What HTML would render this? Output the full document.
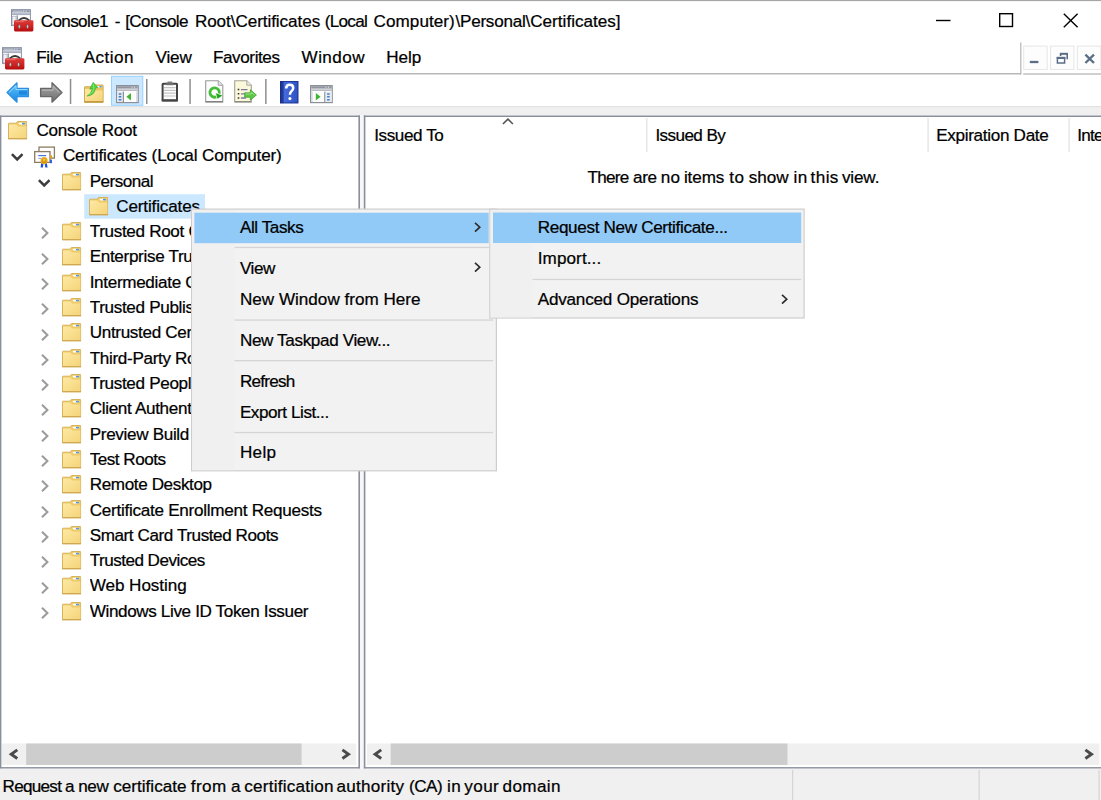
<!DOCTYPE html>
<html><head><meta charset="utf-8"><title>Console1</title>
<style>
html,body{margin:0;padding:0;overflow:hidden}
#w{position:absolute;left:0;top:0;width:1101px;height:800px;overflow:hidden;background:#fff}
body{width:1101px;height:800px;position:relative;overflow:hidden;background:#fff;font-family:"Liberation Sans",sans-serif;font-size:17.1px;color:#000}
.t{position:absolute;white-space:pre;line-height:20px;height:20px;color:#000;-webkit-text-stroke:0.24px #000}
.a{position:absolute}
svg{position:absolute;overflow:visible}

</style></head>
<body>
<div id="w">

<svg width="0" height="0" style="position:absolute">
<defs>
<linearGradient id="fg" x1="0" y1="0" x2="1" y2="1"><stop offset="0" stop-color="#fde9a4"/><stop offset="1" stop-color="#f5d47a"/></linearGradient>
<linearGradient id="bl" x1="0" y1="0" x2="0" y2="1"><stop offset="0" stop-color="#62c4f8"/><stop offset="1" stop-color="#1787e4"/></linearGradient>
<linearGradient id="gr" x1="0" y1="0" x2="0" y2="1"><stop offset="0" stop-color="#a9a9a9"/><stop offset="1" stop-color="#6d6d6d"/></linearGradient>
<linearGradient id="rd" x1="0" y1="0" x2="0" y2="1"><stop offset="0" stop-color="#dc3c38"/><stop offset="0.6" stop-color="#cc2222"/><stop offset="1" stop-color="#b30c0c"/></linearGradient>
<linearGradient id="hb" x1="0" y1="0" x2="1" y2="0"><stop offset="0" stop-color="#1b318c"/><stop offset="0.18" stop-color="#23409f"/><stop offset="0.22" stop-color="#456bdc"/><stop offset="1" stop-color="#2d52c2"/></linearGradient>
<symbol id="folder" viewBox="0 0 19.3 18.5">
  <path d="M0.5 2.7 Q0.5 2.2 1 2.2 H8.2 L9.4 0.5 H18.3 Q18.8 0.5 18.8 1 V17.9 H0.5 Z" fill="#efca68" stroke="#d8b35a" stroke-width="1"/>
  <path d="M1 3.4 H8.4 L10 5.5 H18.3 V17.3 H1 Z" fill="url(#fg)"/>
  <path d="M0.2 17.9 H19.1" stroke="#c6a04a" stroke-width="1.1"/>
  <rect x="10.6" y="1.7" width="6.4" height="1.7" rx=".8" fill="#fff"/><rect x="13.9" y="1.7" width="3.1" height="1.7" rx=".8" fill="#4a96e8"/>
</symbol>
<symbol id="chevr" viewBox="0 0 8 12"><path d="M1 0.8 L6.4 6 L1 11.2" fill="none" stroke="#9c9c9c" stroke-width="2.1"/></symbol>
<symbol id="chevd" viewBox="0 0 12 8"><path d="M0.8 1 L6 6.3 L11.2 1" fill="none" stroke="#3d3d3d" stroke-width="2.5"/></symbol>
<symbol id="marr" viewBox="0 0 7 10.4"><path d="M1 0.8 L5.8 5.2 L1 9.6" fill="none" stroke="#2e2e2e" stroke-width="1.7"/></symbol>
<symbol id="toolbox" viewBox="0 0 23 23">
  <rect x="0.5" y="0.6" width="18.9" height="16" fill="#fff" stroke="#8a92a6" stroke-width="1"/>
  <rect x="1" y="1.2" width="17.9" height="2.3" fill="#8f97ab"/>
  <rect x="12.4" y="1.6" width=".7" height="1.5" fill="#e8eaf0"/><rect x="14.7" y="1.6" width=".7" height="1.5" fill="#e8eaf0"/><rect x="2" y="2" width="9.5" height=".7" fill="#c5cad6"/>
  <rect x="1" y="4.2" width="17.9" height="1.9" fill="#a9afc0"/>
  <rect x="1.6" y="7.2" width="3.4" height="8.6" fill="#eef0f4" stroke="#9aa2b4" stroke-width=".5"/>
  <rect x="5.6" y="6.4" width="1.2" height="9.8" fill="#7d87a0"/>
  <path d="M7.6 11.6 Q13 6.6 18.4 11.6" fill="none" stroke="#3a3a3a" stroke-width="1.9"/>
  <rect x="3" y="11.2" width="19.4" height="11.2" rx="1.3" fill="url(#rd)"/>
  <rect x="4.4" y="12.3" width="9" height=".8" fill="#f08a86" opacity=".8"/>
  <ellipse cx="8.3" cy="17.6" rx="1.15" ry="2.1" fill="#b4d2d2" stroke="#8c2a2a" stroke-width=".6"/>
  <ellipse cx="16.6" cy="17.6" rx="1.15" ry="2.1" fill="#b4d2d2" stroke="#8c2a2a" stroke-width=".6"/>
</symbol>
</defs></svg>
<svg style="left:0;top:0;" width="1101" height="800"><rect x="0.00" y="0.00" width="1101.00" height="1.10" fill="#a6a6a6"/></svg>
<svg style="left:11px;top:8.6px;" width="23" height="23"><use href="#toolbox" width="23" height="23"/></svg>
<svg style="left:2.4px;top:46.6px;" width="23" height="23"><use href="#toolbox" width="23" height="23"/></svg>
<svg style="left:930px;top:8px" width="160" height="26"><path d="M6 12.5 H20.5" stroke="#000" stroke-width="1.4"/><rect x="69.7" y="5.7" width="12.8" height="12.8" fill="none" stroke="#000" stroke-width="1.4"/><path d="M133.8 5.8 L147.6 19.2 M147.6 5.8 L133.8 19.2" stroke="#000" stroke-width="1.4"/></svg>
<svg style="left:0;top:0;" width="1101" height="800"><rect x="0.00" y="73.00" width="1021.20" height="1.50" fill="#b7b7b7"/></svg>
<svg style="left:0;top:0;" width="1101" height="800"><rect x="1023.20" y="73.30" width="78.00" height="1.40" fill="#bcbcbc"/></svg>
<svg style="left:0;top:0;" width="1101" height="800"><rect x="1020.20" y="42.50" width="1.20" height="32.00" fill="#b4b4ba"/></svg>
<svg style="left:0;top:0;" width="1101" height="800"><rect x="1023.70" y="46.10" width="23.50" height="23.30" fill="#fdfdfd" stroke="#e6e6e6" stroke-width="1.0"/></svg>
<svg style="left:0;top:0;" width="1101" height="800"><rect x="1050.60" y="46.10" width="23.30" height="23.30" fill="#fdfdfd" stroke="#e6e6e6" stroke-width="1.0"/></svg>
<svg style="left:0;top:0;" width="1101" height="800"><rect x="1077.30" y="46.10" width="23.50" height="23.30" fill="#fdfdfd" stroke="#e6e6e6" stroke-width="1.0"/></svg>
<svg style="left:1022px;top:44px" width="79" height="28"><path d="M7.8 18 H16.4" stroke="#5a6e87" stroke-width="2.3"/><path d="M38 9.9 H45.2 V15.2 M38.6 9.9 V12" fill="none" stroke="#5a6e87" stroke-width="1.6"/><path d="M37.8 9.6 H46" stroke="#5a6e87" stroke-width="1.6"/><rect x="35.4" y="13.8" width="7.2" height="5.2" fill="none" stroke="#5a6e87" stroke-width="1.5"/><path d="M34.7 13.9 H43.3" stroke="#5a6e87" stroke-width="2.2"/><path d="M63.4 10.6 L72 19 M72 10.6 L63.4 19" stroke="#5a6e87" stroke-width="2.3"/></svg>
<svg style="left:0;top:0;" width="1101" height="800"><rect x="69.80" y="79.00" width="1.50" height="25.00" fill="#8e8e8e"/></svg>
<svg style="left:0;top:0;" width="1101" height="800"><rect x="146.00" y="79.00" width="1.50" height="25.00" fill="#8e8e8e"/></svg>
<svg style="left:0;top:0;" width="1101" height="800"><rect x="189.30" y="79.00" width="1.50" height="25.00" fill="#8e8e8e"/></svg>
<svg style="left:0;top:0;" width="1101" height="800"><rect x="265.10" y="79.00" width="1.50" height="25.00" fill="#8e8e8e"/></svg>
<svg style="left:0;top:0;" width="1101" height="800"><rect x="111.50" y="76.30" width="31.30" height="29.00" fill="#cce8ff" stroke="#99d1ff" stroke-width="1.0"/></svg>
<svg style="left:6px;top:81px" width="24" height="23"><path d="M1 11.5 L11 1.8 V7.4 H22.4 V15.6 H11 V21.2 Z" fill="url(#bl)" stroke="#2d8fe2" stroke-width="1.2" stroke-linejoin="round"/><path d="M3 11.5 L10 4.8 V8.6 H21.2" fill="none" stroke="#a6e0ff" stroke-width="1" opacity=".85"/><path d="M13 9.6 H21 V13.6 H13 Z" fill="#0a6fd6" opacity=".55"/></svg>
<svg style="left:38.5px;top:81px" width="24" height="23"><path d="M23 11.5 L13 1.8 V7.4 H1.6 V15.6 H13 V21.2 Z" fill="url(#gr)" stroke="#676767" stroke-width="1.3" stroke-linejoin="round"/><path d="M3 9.2 H14 V5.5 L20.5 11.5" fill="none" stroke="#c2c2c2" stroke-width="1" opacity=".8"/></svg>
<svg style="left:84px;top:80px" width="21" height="24"><path d="M0.5 7.2 Q0.5 6.7 1 6.7 H8.4 L9.8 5 H18.6 Q19.1 5 19.1 5.5 V22.2 H0.5 Z" fill="#ecc666" stroke="#d2ab52"/><path d="M1 9 H9 L11 10.6 H18.6 V21.6 H1 Z" fill="url(#fg)"/><rect x="0.3" y="21" width="19" height="1.7" fill="#c39c46"/><rect x="13" y="6" width="4.8" height="1.5" rx=".7" fill="#fff"/><rect x="15.2" y="6" width="2.6" height="1.5" rx=".7" fill="#4f9be6"/><path d="M3.2 16 Q7.6 14 8.3 8.6 L5.8 9.2 L9.2 2.4 L13.8 7.6 L11.3 8 Q11.2 15 3.2 16 Z" fill="#52d742" stroke="#36ac2b" stroke-width=".7"/><path d="M9.3 4.4 L9.8 8.4 Q9.4 12.4 5.6 14.6" fill="none" stroke="#8af27a" stroke-width="1" opacity=".8"/></svg>
<svg style="left:116.2px;top:85.1px" width="24" height="19"><rect x="0.6" y="0.6" width="21.6" height="17" fill="#fdfdfd" stroke="#8a8f98" stroke-width="1.2"/><rect x="1.2" y="1.2" width="20.4" height="2.4" fill="#9196a0"/><rect x="15.6" y="1.7" width=".8" height="1.4" fill="#e0e2e6"/><rect x="18" y="1.7" width=".8" height="1.4" fill="#e0e2e6"/><rect x="1.2" y="4.3" width="20.4" height="1.7" fill="#b9bcc4"/><rect x="1.2" y="6.6" width="5.6" height="10.4" fill="#e3e5ea"/><rect x="20.2" y="6.6" width="1.4" height="10.4" fill="#d4d6dc"/><rect x="6.8" y="6.6" width="1.2" height="10.4" fill="#8a8f98"/><rect x="2.6" y="8.2" width="2.8" height="1.5" rx=".6" fill="#3c7fd0"/><rect x="2.6" y="11.1" width="2.8" height="1.5" rx=".6" fill="#3c7fd0"/><rect x="2.6" y="14" width="2.8" height="1.5" rx=".6" fill="#3c7fd0"/><path d="M15 8 V15.6 L10.4 11.8 Z" fill="#3eb534"/></svg>
<svg style="left:161.2px;top:80.8px" width="18" height="21"><rect x="1.6" y="2.7" width="14.4" height="16.8" rx=".6" fill="#fdfdfd" stroke="#444" stroke-width="2"/><rect x="0.7" y="18.4" width="16.2" height="2" fill="#444"/><rect x="5.2" y="1.6" width="7.2" height="2.6" fill="#6e6e6e"/><rect x="6.6" y="0.5" width="4.4" height="1.6" fill="#7e7e7e"/><path d="M3 6.6 H14.6 M3 9.4 H14.6 M3 12.2 H14.6 M3 15 H14.6" stroke="#c4c4c4" stroke-width="1.2"/></svg>
<svg style="left:204.7px;top:80.3px" width="20" height="23"><path d="M0.7 0.7 H13.2 L17.8 5.3 V21.6 H0.7 Z" fill="#fdfdfd" stroke="#9a9a9a" stroke-width="1.1"/><path d="M0.5 21.9 H18" stroke="#7a7a7a" stroke-width="1.2"/><path d="M13.2 0.7 V5.3 H17.8" fill="#e4e4e4" stroke="#9a9a9a" stroke-width=".9"/><path d="M11.3 16.9 A4.7 4.7 0 1 1 14.2 13.6" fill="none" stroke="#43bd38" stroke-width="2.8"/><path d="M10.8 13.2 L17.4 15.4 L12.6 18.8 Z" fill="#1fa51a"/></svg>
<svg style="left:234.4px;top:79.8px" width="24" height="23"><path d="M0.7 0.7 H12.8 L17.3 5.2 V21.6 H0.7 Z" fill="#fcf8dc" stroke="#a3a394" stroke-width="1.1"/><path d="M0.5 21.9 H17.6" stroke="#85857a" stroke-width="1.2"/><path d="M12.8 0.7 V5.2 H17.3" fill="#eee" stroke="#a3a394" stroke-width=".9"/><path d="M3.7 9.6 H5.3 M3.7 13.8 H5.3 M3.7 18 H5.3" stroke="#333" stroke-width="1.5"/><path d="M6.9 9.6 H13.5 M6.9 13.8 H11 M6.9 18 H12" stroke="#7a7aa0" stroke-width="1.3"/><path d="M10.7 12.8 H16.3 V9.8 L22.4 15 L16.3 20.2 V17.2 H10.7 Z" fill="#5cc845" stroke="#3fa32e" stroke-width=".8"/><path d="M11.7 14 H17.2 V12.2 L20.4 15" fill="none" stroke="#b4eca4" stroke-width=".9" opacity=".8"/></svg>
<svg style="left:279.5px;top:80.5px" width="19" height="23"><rect x="0" y="0" width="18.3" height="22.3" fill="url(#hb)"/><rect x="0.4" y="0.4" width="17.5" height="21.5" fill="none" stroke="#1c2f86" stroke-width=".8"/><path d="M6.2 7.4 Q6.2 3.8 9.7 3.8 Q13.2 3.8 13.2 6.9 Q13.2 8.9 11.4 10.2 Q9.9 11.4 9.9 13.8" fill="none" stroke="#fff" stroke-width="2.5"/><circle cx="9.9" cy="17.6" r="1.55" fill="#fff"/></svg>
<svg style="left:310.3px;top:85.1px" width="24" height="19"><rect x="0.6" y="0.6" width="21.6" height="17" fill="#fdfdfd" stroke="#8a8f98" stroke-width="1.2"/><rect x="1.2" y="1.2" width="20.4" height="2.4" fill="#9196a0"/><rect x="15.6" y="1.7" width=".8" height="1.4" fill="#e0e2e6"/><rect x="18" y="1.7" width=".8" height="1.4" fill="#e0e2e6"/><rect x="1.2" y="4.3" width="20.4" height="1.7" fill="#b9bcc4"/><rect x="15.2" y="6.6" width="6.4" height="10.4" fill="#e9ebef"/><rect x="1.2" y="6.6" width="1.4" height="10.4" fill="#d4d6dc"/><rect x="14.2" y="6.6" width="1.1" height="10.4" fill="#8a8f98"/><rect x="17" y="8.2" width="2.8" height="1.5" rx=".6" fill="#3c7fd0"/><rect x="17" y="11.1" width="2.8" height="1.5" rx=".6" fill="#3c7fd0"/><rect x="17" y="14" width="2.8" height="1.5" rx=".6" fill="#3c7fd0"/><path d="M5.8 8 V15.6 L10.6 11.8 Z" fill="#3eb534"/></svg>
<svg style="left:0;top:0;" width="1101" height="800"><rect x="0.00" y="106.40" width="1101.00" height="9.00" fill="#f0f0f0"/></svg>
<svg style="left:0;top:0;" width="1101" height="800"><rect x="0.00" y="106.00" width="1101.00" height="1.20" fill="#e2e2e2"/></svg>
<svg style="left:0;top:0;" width="1101" height="800"><rect x="359.90" y="115.50" width="4.00" height="653.20" fill="#f7f7f7"/></svg>
<svg style="left:0;top:0;" width="1101" height="800"><rect x="0.00" y="115.50" width="360.00" height="1.50" fill="#8a909b"/></svg>
<svg style="left:0;top:0;" width="1101" height="800"><rect x="0.00" y="115.50" width="1.40" height="653.00" fill="#8a909b"/></svg>
<svg style="left:0;top:0;" width="1101" height="800"><rect x="358.40" y="115.50" width="1.60" height="653.00" fill="#8a909b"/></svg>
<svg style="left:0;top:0;" width="1101" height="800"><rect x="0.00" y="767.10" width="360.00" height="1.60" fill="#8a909b"/></svg>
<svg style="left:0;top:0;" width="1101" height="800"><rect x="363.80" y="115.50" width="738.00" height="1.50" fill="#8a909b"/></svg>
<svg style="left:0;top:0;" width="1101" height="800"><rect x="363.80" y="115.50" width="1.60" height="653.00" fill="#8a909b"/></svg>
<svg style="left:0;top:0;" width="1101" height="800"><rect x="363.80" y="767.10" width="738.00" height="1.60" fill="#8a909b"/></svg>
<svg style="left:0;top:0;" width="1101" height="800"><rect x="2.00" y="743.50" width="354.20" height="21.50" fill="#f0f0f0"/></svg>
<svg style="left:0;top:0;" width="1101" height="800"><rect x="26.20" y="743.50" width="275.40" height="21.50" fill="#cdcdcd"/></svg>
<svg style="left:0;top:0;" width="1101" height="800"><rect x="367.00" y="743.50" width="732.40" height="21.50" fill="#f0f0f0"/></svg>
<svg style="left:0;top:0;" width="1101" height="800"><rect x="390.70" y="743.50" width="396.80" height="21.50" fill="#cdcdcd"/></svg>
<svg style="left:0;top:0" width="1101" height="800"><path d="M17.3 749.9 L11.2 754.2 L17.3 758.5" fill="none" stroke="#4a4a4a" stroke-width="2.9"/><path d="M342.4 749.9 L348.5 754.2 L342.4 758.5" fill="none" stroke="#4a4a4a" stroke-width="2.9"/><path d="M381.2 749.9 L375.1 754.2 L381.2 758.5" fill="none" stroke="#4a4a4a" stroke-width="2.9"/><path d="M1085.4 749.9 L1091.5 754.2 L1085.4 758.5" fill="none" stroke="#4a4a4a" stroke-width="2.9"/></svg>
<svg style="left:0;top:0;" width="1101" height="800"><rect x="0.00" y="768.70" width="1101.00" height="32.00" fill="#f0f0f0"/></svg>
<svg style="left:0;top:0;" width="1101" height="800"><rect x="792.00" y="770.00" width="1.20" height="30.00" fill="#d4d4d4"/></svg>
<svg style="left:0;top:0;" width="1101" height="800"><rect x="978.50" y="770.00" width="1.20" height="30.00" fill="#d4d4d4"/></svg>
<svg style="left:0;top:0;" width="1101" height="800"><rect x="1098.50" y="770.00" width="1.20" height="30.00" fill="#d4d4d4"/></svg>
<svg style="left:0;top:0;" width="1101" height="800"><rect x="646.20" y="118.00" width="1.20" height="34.00" fill="#e2e2e2"/></svg>
<svg style="left:0;top:0;" width="1101" height="800"><rect x="927.50" y="118.00" width="1.20" height="34.00" fill="#e2e2e2"/></svg>
<svg style="left:0;top:0;" width="1101" height="800"><rect x="1068.50" y="118.00" width="1.20" height="34.00" fill="#e2e2e2"/></svg>
<svg style="left:501px;top:118px" width="14" height="8"><path d="M1.9 6 L6.9 1.1 L11.9 6" fill="none" stroke="#555" stroke-width="1.6"/></svg><svg style="left:0;top:0;" width="1101" height="800"><rect x="84.20" y="194.20" width="120.80" height="24.50" fill="#cce8ff"/></svg>
<svg style="left:7.8px;top:121.1px;" width="19.3" height="18.5"><use href="#folder" width="19.3" height="18.5"/></svg>
<svg style="left:11.2px;top:153.4px;" width="12.4" height="8.2"><use href="#chevd" width="12.4" height="8.2"/></svg>
<svg style="left:33.7px;top:146px" width="22" height="23"><rect x="5" y="1.1" width="15.4" height="11" fill="#fff" stroke="#8d7b62" stroke-width="1.3"/><rect x="0.7" y="5.6" width="15.3" height="10.8" fill="#fff" stroke="#8d7b62" stroke-width="1.3"/><path d="M4.3 9.6 H12.2" stroke="#4a6fe0" stroke-width="1.2"/><path d="M4.3 12.4 H7" stroke="#8aa4ee" stroke-width="1"/><path d="M7.2 17 L6.6 21.6 L8.9 21.6 L9.4 18 Z M12.8 17 L13.6 21.6 L11.3 21.6 L10.8 18 Z" fill="#1c50ea"/><rect x="16.2" y="13.6" width="1.7" height="3.6" fill="#1c50ea"/><path d="M16.4 8.6 Q18.6 9 18.2 11.6 Q17.6 13.6 16.4 13.6 Z" fill="#e3a116"/><circle cx="10.1" cy="14.6" r="3.5" fill="#eaa91a"/><circle cx="10.1" cy="15.2" r="2.2" fill="#d9950c"/><circle cx="10.1" cy="14" r="1.3" fill="#f3bf45"/></svg>
<svg style="left:38px;top:178.70000000000002px;" width="12.4" height="8.2"><use href="#chevd" width="12.4" height="8.2"/></svg>
<svg style="left:61.6px;top:171.6px;" width="19.3" height="18.5"><use href="#folder" width="19.3" height="18.5"/></svg>
<svg style="left:88.5px;top:196.9px;" width="19.3" height="18.5"><use href="#folder" width="19.3" height="18.5"/></svg>
<svg style="left:40.6px;top:227.3px;" width="8" height="12"><use href="#chevr" width="8" height="12"/></svg>
<svg style="left:61.6px;top:222.10000000000002px;" width="19.3" height="18.5"><use href="#folder" width="19.3" height="18.5"/></svg>
<svg style="left:40.6px;top:252.6px;" width="8" height="12"><use href="#chevr" width="8" height="12"/></svg>
<svg style="left:61.6px;top:247.4px;" width="19.3" height="18.5"><use href="#folder" width="19.3" height="18.5"/></svg>
<svg style="left:40.6px;top:277.90000000000003px;" width="8" height="12"><use href="#chevr" width="8" height="12"/></svg>
<svg style="left:61.6px;top:272.70000000000005px;" width="19.3" height="18.5"><use href="#folder" width="19.3" height="18.5"/></svg>
<svg style="left:40.6px;top:303.2px;" width="8" height="12"><use href="#chevr" width="8" height="12"/></svg>
<svg style="left:61.6px;top:298.0px;" width="19.3" height="18.5"><use href="#folder" width="19.3" height="18.5"/></svg>
<svg style="left:40.6px;top:328.5px;" width="8" height="12"><use href="#chevr" width="8" height="12"/></svg>
<svg style="left:61.6px;top:323.3px;" width="19.3" height="18.5"><use href="#folder" width="19.3" height="18.5"/></svg>
<svg style="left:40.6px;top:353.8px;" width="8" height="12"><use href="#chevr" width="8" height="12"/></svg>
<svg style="left:61.6px;top:348.6px;" width="19.3" height="18.5"><use href="#folder" width="19.3" height="18.5"/></svg>
<svg style="left:40.6px;top:379.09999999999997px;" width="8" height="12"><use href="#chevr" width="8" height="12"/></svg>
<svg style="left:61.6px;top:373.9px;" width="19.3" height="18.5"><use href="#folder" width="19.3" height="18.5"/></svg>
<svg style="left:40.6px;top:404.40000000000003px;" width="8" height="12"><use href="#chevr" width="8" height="12"/></svg>
<svg style="left:61.6px;top:399.20000000000005px;" width="19.3" height="18.5"><use href="#folder" width="19.3" height="18.5"/></svg>
<svg style="left:40.6px;top:429.7px;" width="8" height="12"><use href="#chevr" width="8" height="12"/></svg>
<svg style="left:61.6px;top:424.5px;" width="19.3" height="18.5"><use href="#folder" width="19.3" height="18.5"/></svg>
<svg style="left:40.6px;top:455.00000000000006px;" width="8" height="12"><use href="#chevr" width="8" height="12"/></svg>
<svg style="left:61.6px;top:449.80000000000007px;" width="19.3" height="18.5"><use href="#folder" width="19.3" height="18.5"/></svg>
<svg style="left:40.6px;top:480.3px;" width="8" height="12"><use href="#chevr" width="8" height="12"/></svg>
<svg style="left:61.6px;top:475.1px;" width="19.3" height="18.5"><use href="#folder" width="19.3" height="18.5"/></svg>
<svg style="left:40.6px;top:505.59999999999997px;" width="8" height="12"><use href="#chevr" width="8" height="12"/></svg>
<svg style="left:61.6px;top:500.4px;" width="19.3" height="18.5"><use href="#folder" width="19.3" height="18.5"/></svg>
<svg style="left:40.6px;top:530.9000000000001px;" width="8" height="12"><use href="#chevr" width="8" height="12"/></svg>
<svg style="left:61.6px;top:525.7px;" width="19.3" height="18.5"><use href="#folder" width="19.3" height="18.5"/></svg>
<svg style="left:40.6px;top:556.2px;" width="8" height="12"><use href="#chevr" width="8" height="12"/></svg>
<svg style="left:61.6px;top:551.0px;" width="19.3" height="18.5"><use href="#folder" width="19.3" height="18.5"/></svg>
<svg style="left:40.6px;top:581.5000000000001px;" width="8" height="12"><use href="#chevr" width="8" height="12"/></svg>
<svg style="left:61.6px;top:576.3000000000001px;" width="19.3" height="18.5"><use href="#folder" width="19.3" height="18.5"/></svg>
<svg style="left:40.6px;top:606.8000000000001px;" width="8" height="12"><use href="#chevr" width="8" height="12"/></svg>
<svg style="left:61.6px;top:601.6px;" width="19.3" height="18.5"><use href="#folder" width="19.3" height="18.5"/></svg><svg style="left:0;top:0;z-index:10;" width="1101" height="800"><rect x="191.60" y="209.10" width="304.80" height="261.70" fill="#f2f2f2" stroke="#cdcdcd" stroke-width="1.2"/></svg>
<svg style="left:0;top:0;z-index:10;" width="1101" height="800"><rect x="192.20" y="210.00" width="42.30" height="260.20" fill="#f0f0f0"/></svg>
<svg style="left:0;top:0;z-index:10;" width="1101" height="800"><rect x="194.40" y="212.70" width="294.30" height="30.50" fill="#91c9f7"/></svg>
<svg style="left:0;top:0;z-index:10;" width="1101" height="800"><rect x="234.50" y="246.80" width="258.50" height="1.30" fill="#d5d5d5"/></svg>
<svg style="left:0;top:0;z-index:10;" width="1101" height="800"><rect x="234.50" y="319.40" width="258.50" height="1.30" fill="#d5d5d5"/></svg>
<svg style="left:0;top:0;z-index:10;" width="1101" height="800"><rect x="234.50" y="360.00" width="258.50" height="1.30" fill="#d5d5d5"/></svg>
<svg style="left:0;top:0;z-index:10;" width="1101" height="800"><rect x="234.50" y="431.90" width="258.50" height="1.30" fill="#d5d5d5"/></svg>
<svg style="left:474px;top:222px;z-index:10;" width="7" height="10.4"><use href="#marr" width="7" height="10.4"/></svg>
<svg style="left:474px;top:262.4px;z-index:10;" width="7" height="10.4"><use href="#marr" width="7" height="10.4"/></svg>
<svg style="left:0;top:0;z-index:12;" width="1101" height="800"><rect x="489.90" y="209.10" width="314.20" height="108.90" fill="#f2f2f2" stroke="#cdcdcd" stroke-width="1.2"/></svg>
<svg style="left:0;top:0;z-index:12;" width="1101" height="800"><rect x="490.50" y="210.00" width="42.00" height="107.40" fill="#f0f0f0"/></svg>
<svg style="left:0;top:0;z-index:12;" width="1101" height="800"><rect x="493.00" y="212.50" width="308.20" height="30.50" fill="#91c9f7"/></svg>
<svg style="left:0;top:0;z-index:12;" width="1101" height="800"><rect x="532.50" y="278.80" width="268.70" height="1.30" fill="#d5d5d5"/></svg>
<svg style="left:781.2px;top:294px;z-index:12;" width="7" height="10.4"><use href="#marr" width="7" height="10.4"/></svg>
<span class="t" style="left:40.70px;top:12.00px;letter-spacing:-0.619px;">Console1</span>
<span class="t" style="left:114.70px;top:12.00px;letter-spacing:0.000px;">-</span>
<span class="t" style="left:125.20px;top:12.00px;letter-spacing:-0.581px;">[Console</span>
<span class="t" style="left:194.90px;top:12.00px;letter-spacing:-0.066px;">Root\Certificates</span>
<span class="t" style="left:324.80px;top:12.00px;letter-spacing:-0.713px;">(Local</span>
<span class="t" style="left:373.60px;top:12.00px;letter-spacing:0.056px;">Computer)</span>
<span class="t" style="left:455.50px;top:12.00px;letter-spacing:-0.252px;">\Personal</span>
<span class="t" style="left:525.50px;top:12.00px;letter-spacing:0.008px;">\Certificates]</span>
<span class="t" style="left:36.30px;top:48.00px;letter-spacing:-0.450px;">File</span>
<span class="t" style="left:83.70px;top:48.00px;letter-spacing:0.457px;">Action</span>
<span class="t" style="left:155.60px;top:48.00px;letter-spacing:-0.183px;">View</span>
<span class="t" style="left:213.00px;top:48.00px;letter-spacing:-0.412px;">Favorites</span>
<span class="t" style="left:301.60px;top:48.00px;letter-spacing:0.421px;">Window</span>
<span class="t" style="left:386.30px;top:48.00px;letter-spacing:-0.052px;">Help</span>
<span class="t" style="left:36.50px;top:121.00px;letter-spacing:-0.280px;width:319.7px;overflow:hidden;">Console Root</span>
<span class="t" style="left:62.90px;top:146.00px;letter-spacing:-0.121px;width:293.3px;overflow:hidden;">Certificates (Local Computer)</span>
<span class="t" style="left:89.70px;top:172.00px;letter-spacing:-0.524px;width:266.5px;overflow:hidden;">Personal</span>
<span class="t" style="left:116.20px;top:197.00px;letter-spacing:-0.145px;width:240.0px;overflow:hidden;">Certificates</span>
<span class="t" style="left:89.70px;top:222.00px;letter-spacing:-0.324px;width:266.5px;overflow:hidden;">Trusted Root Certification Authorities</span>
<span class="t" style="left:89.70px;top:247.00px;letter-spacing:-0.324px;width:266.5px;overflow:hidden;">Enterprise Trust</span>
<span class="t" style="left:89.70px;top:273.00px;letter-spacing:-0.324px;width:266.5px;overflow:hidden;">Intermediate Certification Authorities</span>
<span class="t" style="left:89.70px;top:298.00px;letter-spacing:-0.324px;width:266.5px;overflow:hidden;">Trusted Publishers</span>
<span class="t" style="left:89.70px;top:323.00px;letter-spacing:-0.324px;width:266.5px;overflow:hidden;">Untrusted Certificates</span>
<span class="t" style="left:89.70px;top:349.00px;letter-spacing:-0.324px;width:266.5px;overflow:hidden;">Third-Party Root Certification Authorities</span>
<span class="t" style="left:89.70px;top:374.00px;letter-spacing:-0.324px;width:266.5px;overflow:hidden;">Trusted People</span>
<span class="t" style="left:89.70px;top:399.00px;letter-spacing:-0.324px;width:266.5px;overflow:hidden;">Client Authentication Issuers</span>
<span class="t" style="left:89.70px;top:425.00px;letter-spacing:-0.324px;width:266.5px;overflow:hidden;">Preview Build Roots</span>
<span class="t" style="left:89.70px;top:450.00px;letter-spacing:-0.485px;width:266.5px;overflow:hidden;">Test Roots</span>
<span class="t" style="left:89.70px;top:475.00px;letter-spacing:-0.378px;width:266.5px;overflow:hidden;">Remote Desktop</span>
<span class="t" style="left:89.70px;top:501.00px;letter-spacing:-0.269px;width:266.5px;overflow:hidden;">Certificate Enrollment Requests</span>
<span class="t" style="left:89.70px;top:526.00px;letter-spacing:-0.420px;width:266.5px;overflow:hidden;">Smart Card Trusted Roots</span>
<span class="t" style="left:89.70px;top:551.00px;letter-spacing:-0.520px;width:266.5px;overflow:hidden;">Trusted Devices</span>
<span class="t" style="left:89.70px;top:576.00px;letter-spacing:-0.045px;width:266.5px;overflow:hidden;">Web Hosting</span>
<span class="t" style="left:89.70px;top:602.00px;letter-spacing:-0.365px;width:266.5px;overflow:hidden;">Windows Live ID Token Issuer</span>
<span class="t" style="left:374.20px;top:126.00px;letter-spacing:-0.407px;">Issued To</span>
<span class="t" style="left:655.40px;top:126.00px;letter-spacing:-0.583px;">Issued By</span>
<span class="t" style="left:936.20px;top:126.00px;letter-spacing:-0.305px;">Expiration Date</span>
<span class="t" style="left:1077.20px;top:126.00px;letter-spacing:-0.750px;width:30.0px;overflow:hidden;">Intended Purposes</span>
<span class="t" style="left:587.60px;top:168.00px;letter-spacing:-0.764px;">There</span>
<span class="t" style="left:633.09px;top:168.00px;letter-spacing:-0.450px;">are</span>
<span class="t" style="left:660.80px;top:168.00px;letter-spacing:0.084px;">no</span>
<span class="t" style="left:683.90px;top:168.00px;letter-spacing:-0.086px;">items</span>
<span class="t" style="left:729.19px;top:168.00px;letter-spacing:0.450px;">to</span>
<span class="t" style="left:748.70px;top:168.00px;letter-spacing:-0.002px;">show</span>
<span class="t" style="left:793.42px;top:168.00px;letter-spacing:0.450px;">in</span>
<span class="t" style="left:810.60px;top:168.00px;letter-spacing:0.397px;">this</span>
<span class="t" style="left:841.90px;top:168.00px;letter-spacing:-0.129px;">view.</span>
<span class="t" style="left:239.90px;top:218.00px;letter-spacing:-0.405px;z-index:20;">All Tasks</span>
<span class="t" style="left:239.90px;top:259.00px;letter-spacing:-0.450px;z-index:20;">View</span>
<span class="t" style="left:239.90px;top:290.00px;letter-spacing:0.011px;z-index:20;">New Window from Here</span>
<span class="t" style="left:239.90px;top:331.00px;letter-spacing:-0.356px;z-index:20;">New Taskpad View...</span>
<span class="t" style="left:239.90px;top:372.00px;letter-spacing:-0.743px;z-index:20;">Refresh</span>
<span class="t" style="left:239.90px;top:403.00px;letter-spacing:-0.440px;z-index:20;">Export List...</span>
<span class="t" style="left:239.90px;top:443.00px;letter-spacing:0.348px;z-index:20;">Help</span>
<span class="t" style="left:537.70px;top:218.00px;letter-spacing:-0.327px;z-index:20;">Request New Certificate...</span>
<span class="t" style="left:537.70px;top:249.00px;letter-spacing:0.100px;z-index:20;">Import...</span>
<span class="t" style="left:537.70px;top:290.00px;letter-spacing:-0.200px;z-index:20;">Advanced Operations</span>
<span class="t" style="left:2.60px;top:777.00px;letter-spacing:-0.729px;">Request</span>
<span class="t" style="left:65.00px;top:777.00px;letter-spacing:0.000px;">a</span>
<span class="t" style="left:78.20px;top:777.00px;letter-spacing:-0.380px;">new</span>
<span class="t" style="left:113.20px;top:777.00px;letter-spacing:0.014px;">certificate</span>
<span class="t" style="left:190.73px;top:777.00px;letter-spacing:0.450px;">from</span>
<span class="t" style="left:231.00px;top:777.00px;letter-spacing:0.000px;">a</span>
<span class="t" style="left:244.20px;top:777.00px;letter-spacing:0.236px;">certification</span>
<span class="t" style="left:336.60px;top:777.00px;letter-spacing:0.242px;">authority</span>
<span class="t" style="left:408.90px;top:777.00px;letter-spacing:-0.450px;">(CA)</span>
<span class="t" style="left:446.92px;top:777.00px;letter-spacing:0.450px;">in</span>
<span class="t" style="left:464.30px;top:777.00px;letter-spacing:0.411px;">your</span>
<span class="t" style="left:502.50px;top:777.00px;letter-spacing:0.384px;">domain</span>
</div>
</body></html>
